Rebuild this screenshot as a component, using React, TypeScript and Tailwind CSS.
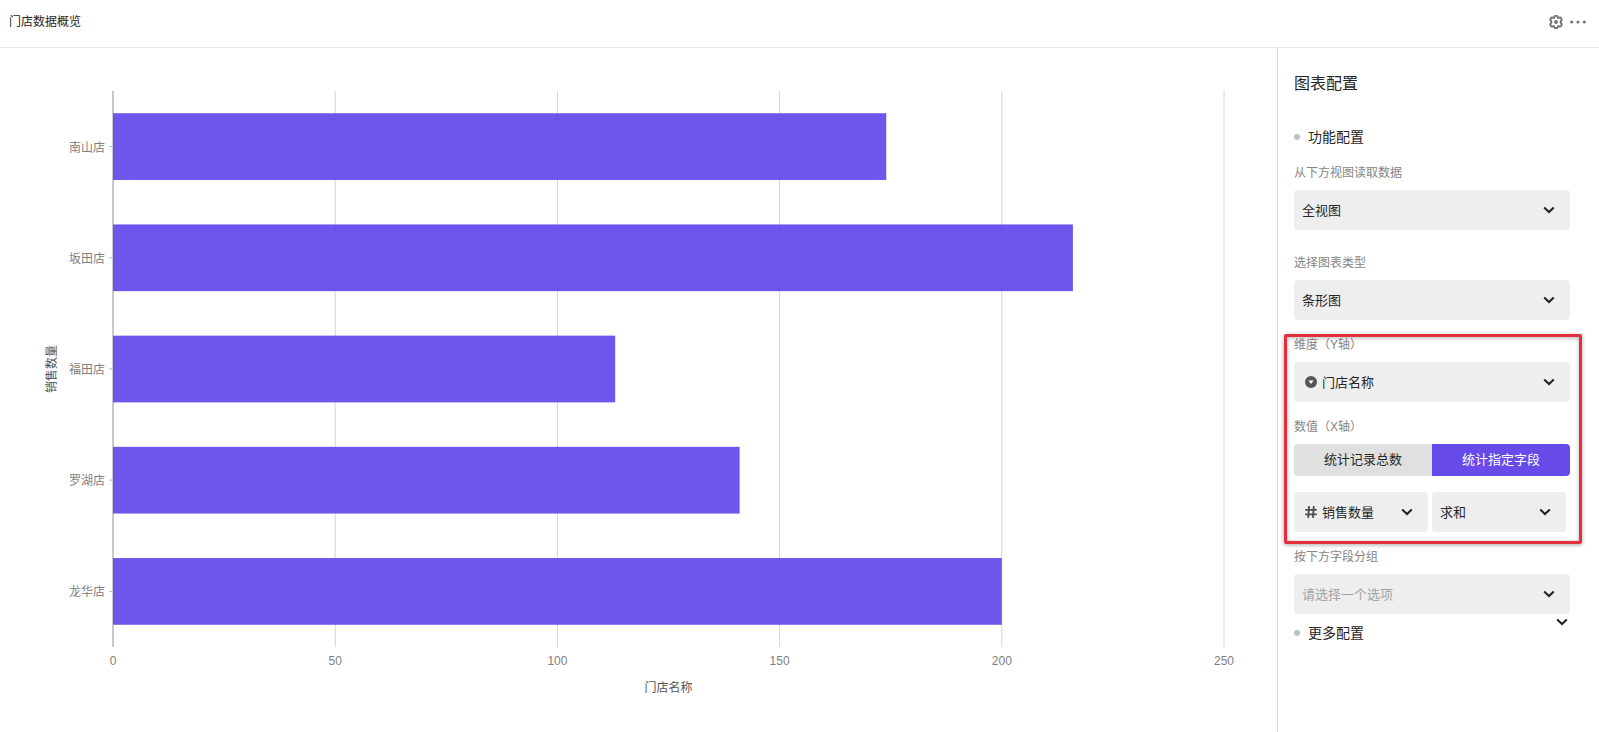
import React, { useState } from "react";

interface Store {
  name: string;
  sales: number;
}

const stores: Store[] = [
  { name: "南山店", sales: 174 },
  { name: "坂田店", sales: 216 },
  { name: "福田店", sales: 113 },
  { name: "罗湖店", sales: 141 },
  { name: "龙华店", sales: 200 },
];

const MAX_VALUE = 250;
const ticks = [0, 50, 100, 150, 200, 250];

const percent = (value: number) => `${value * 100}%`;

const ChevronIcon = () => (
  <svg viewBox="0 0 16 16" className="w-4 h-4" fill="none" aria-hidden="true">
    <path d="M3.2 5.6 8 10l4.8-4.4" stroke="#222" strokeWidth="2.1" />
  </svg>
);

const GearIcon = () => (
  <svg viewBox="-8 -8 16 16" className="w-4 h-4" aria-hidden="true">
    <path
      d="M-1.1-6.1H1.1L2-4.2 4.6-4.5 5.8-2.5 4.5 0 5.8 2.5 4.6 4.5 2 4.2 1.1 6.1H-1.1L-2 4.2-4.6 4.5-5.8 2.5-4.5 0-5.8-2.5-4.6-4.5-2-4.2Z"
      fill="none"
      stroke="#757575"
      strokeWidth="1.9"
      strokeLinejoin="round"
    />
    <circle r="1.9" fill="#757575" />
  </svg>
);

const MoreIcon = () => (
  <svg viewBox="0 0 16 16" className="w-4 h-4" fill="#757575" aria-hidden="true">
    <circle cx="1.7" cy="8" r="1.6" />
    <circle cx="8" cy="8" r="1.6" />
    <circle cx="14.3" cy="8" r="1.6" />
  </svg>
);

const SelectFieldIcon = () => (
  <svg viewBox="0 0 12 12" className="w-3 h-3" aria-hidden="true">
    <circle cx="6" cy="6" r="6" fill="#555" />
    <path d="M3.4 4.6h5.2L6 7.9Z" fill="#fff" />
  </svg>
);

const NumberFieldIcon = () => (
  <svg viewBox="0 0 12 12" className="w-3 h-3" fill="none" aria-hidden="true">
    <path
      d="M.2 3.8h11.6M.2 8.3h11.6M4.1.1 3.2 11.9M8.8.1 7.9 11.9"
      stroke="#4d4d4d"
      strokeWidth="1.8"
    />
  </svg>
);

interface SelectBoxProps {
  id?: string;
  label?: string;
  options: string[];
  icon?: React.ReactNode;
  placeholder?: string;
}

const SelectBox: React.FC<SelectBoxProps> = ({
  id,
  label,
  options,
  icon,
  placeholder,
}) => {
  const [value, setValue] = useState(placeholder ? "" : options[0]);

  return (
    <div className="relative flex-1">
      {icon && (
        <span className="absolute left-[11px] inset-y-0 flex items-center pointer-events-none">
          {icon}
        </span>
      )}
      <select
        id={id}
        aria-label={label}
        value={value}
        onChange={(e) => setValue(e.target.value)}
        className={`appearance-none w-full h-10 pt-px pr-8 rounded bg-[#eeeeee] text-[13px] ${
          icon ? "pl-7" : "pl-2"
        } ${value ? "text-[#262626]" : "text-[#a3a3a3]"}`}
      >
        {placeholder && <option value="">{placeholder}</option>}
        {options.map((option) => (
          <option key={option}>{option}</option>
        ))}
      </select>
      <span className="absolute right-[13px] inset-y-0 flex items-center pointer-events-none">
        <ChevronIcon />
      </span>
    </div>
  );
};

const labelClass = "block text-xs leading-[18px] text-[#858585]";

const Field: React.FC<SelectBoxProps & { title: string }> = ({
  title,
  ...select
}) => (
  <div className="flex flex-col gap-2">
    <label htmlFor={select.id} className={labelClass}>
      {title}
    </label>
    <SelectBox {...select} />
  </div>
);

const SectionTitle = ({ children }: { children: React.ReactNode }) => (
  <h3 className="flex items-center gap-2 text-sm leading-[22px] text-[#262626]">
    <span className="w-1.5 h-1.5 rounded-full bg-[#bfbfbf]" />
    {children}
  </h3>
);

const BarChart = () => {
  const band = 1 / stores.length;

  return (
    <svg
      className="flex-1 w-full min-h-[400px] overflow-visible text-xs"
      role="img"
      aria-label="门店数据概览"
    >
      {/* Grid lines and value labels */}
      {ticks.map((tick) => (
        <g key={tick}>
          <line
            x1={percent(tick / MAX_VALUE)}
            x2={percent(tick / MAX_VALUE)}
            y1="0"
            y2="100%"
            stroke={tick === 0 ? "#c8c8c8" : "#d4d4d4"}
            strokeWidth={tick === 0 ? 2 : 1}
          />
          <text
            x={percent(tick / MAX_VALUE)}
            y="100%"
            dy="18"
            textAnchor="middle"
            fill="#808080"
          >
            {tick}
          </text>
        </g>
      ))}

      {/* Bars */}
      {stores.map((store, index) => (
        <g key={store.name}>
          <line
            x1="-4"
            x2="-1"
            y1={percent((index + 0.5) * band)}
            y2={percent((index + 0.5) * band)}
            stroke="#bbb"
          />
          <text
            x="-8"
            y={percent((index + 0.5) * band)}
            dy="5"
            textAnchor="end"
            fill="#808080"
          >
            {store.name}
          </text>
          <rect
            x="0"
            y={percent((index + 0.2) * band)}
            width={percent(store.sales / MAX_VALUE)}
            height={percent(0.6 * band)}
            fill="#5e43e9"
            fillOpacity="0.9"
          />
        </g>
      ))}

      {/* Axis names */}
      <text x="50%" y="100%" dy="45" textAnchor="middle" fill="#555">
        门店名称
      </text>
      <svg x="-57" y="50%" className="overflow-visible">
        <text transform="rotate(-90)" textAnchor="middle" fill="#555">
          销售数量
        </text>
      </svg>
    </svg>
  );
};

const modes = ["统计记录总数", "统计指定字段"];

const ConfigPanel = () => {
  const [mode, setMode] = useState(modes[1]);

  return (
    <aside className="w-[322px] shrink-0 border-l border-[#dcdcdc] pl-4 pr-[29px] pt-6 pb-6">
      <h2 className="text-base leading-6 text-[#262626] mb-[30px]">图表配置</h2>
      <SectionTitle>功能配置</SectionTitle>

      <div className="flex flex-col gap-6 mt-4">
        <Field id="view" title="从下方视图读取数据" options={["全视图"]} />
        <Field id="chart-type" title="选择图表类型" options={["条形图"]} />
      </div>

      <div className="relative flex flex-col gap-4 my-4">
        <Field
          id="dimension"
          title="维度（Y轴）"
          options={["门店名称"]}
          icon={<SelectFieldIcon />}
        />
        <div role="group" aria-labelledby="value-label">
          <span id="value-label" className={labelClass}>
            数值（X轴）
          </span>
          <div className="flex mt-2 rounded overflow-hidden">
            {modes.map((item) => (
              <button
                key={item}
                type="button"
                aria-pressed={item === mode}
                onClick={() => setMode(item)}
                className={`flex-1 h-8 text-[13px] ${
                  item === mode
                    ? "bg-[#674ae8] text-white"
                    : "bg-[#e0e0e0] text-[#262626]"
                }`}
              >
                {item}
              </button>
            ))}
          </div>
        </div>
        <div className="flex gap-1 pr-1">
          <SelectBox
            label="统计字段"
            options={["销售数量"]}
            icon={<NumberFieldIcon />}
          />
          <SelectBox label="统计方式" options={["求和", "平均值"]} />
        </div>

        {/* Highlight frame */}
        <div className="absolute -left-2.5 -right-3 -top-0.5 -bottom-3 border-3 border-[#e5303b] rounded-xs shadow-[0_1px_4px_rgba(0,0,0,0.35),inset_0_1px_4px_rgba(0,0,0,0.3)] pointer-events-none" />
      </div>

      <Field
        id="group-by"
        title="按下方字段分组"
        options={["门店名称"]}
        placeholder="请选择一个选项"
      />
      <div className="flex items-start justify-between">
        <div className="pt-2">
          <SectionTitle>更多配置</SectionTitle>
        </div>
        <button type="button" aria-label="展开更多配置">
          <ChevronIcon />
        </button>
      </div>
    </aside>
  );
};

export default function App() {
  return (
    <div className="min-h-screen flex flex-col bg-white font-['Liberation_Sans','Noto_Sans_CJK_SC',sans-serif]">
      <header className="h-12 shrink-0 flex items-center justify-between pl-[9px] pr-[13px] pb-[3px] border-b border-[#e8e8e8]">
        <h1 className="text-xs text-[#262626]">门店数据概览</h1>
        <div className="flex items-center gap-1.5">
          <button type="button" aria-label="设置">
            <GearIcon />
          </button>
          <button type="button" aria-label="更多">
            <MoreIcon />
          </button>
        </div>
      </header>
      <div className="flex-1 flex">
        <main className="flex-1 min-w-0 flex flex-col pl-[113px] pr-[53px] pt-[43px] pb-[85px]">
          <BarChart />
        </main>
        <ConfigPanel />
      </div>
    </div>
  );
}
